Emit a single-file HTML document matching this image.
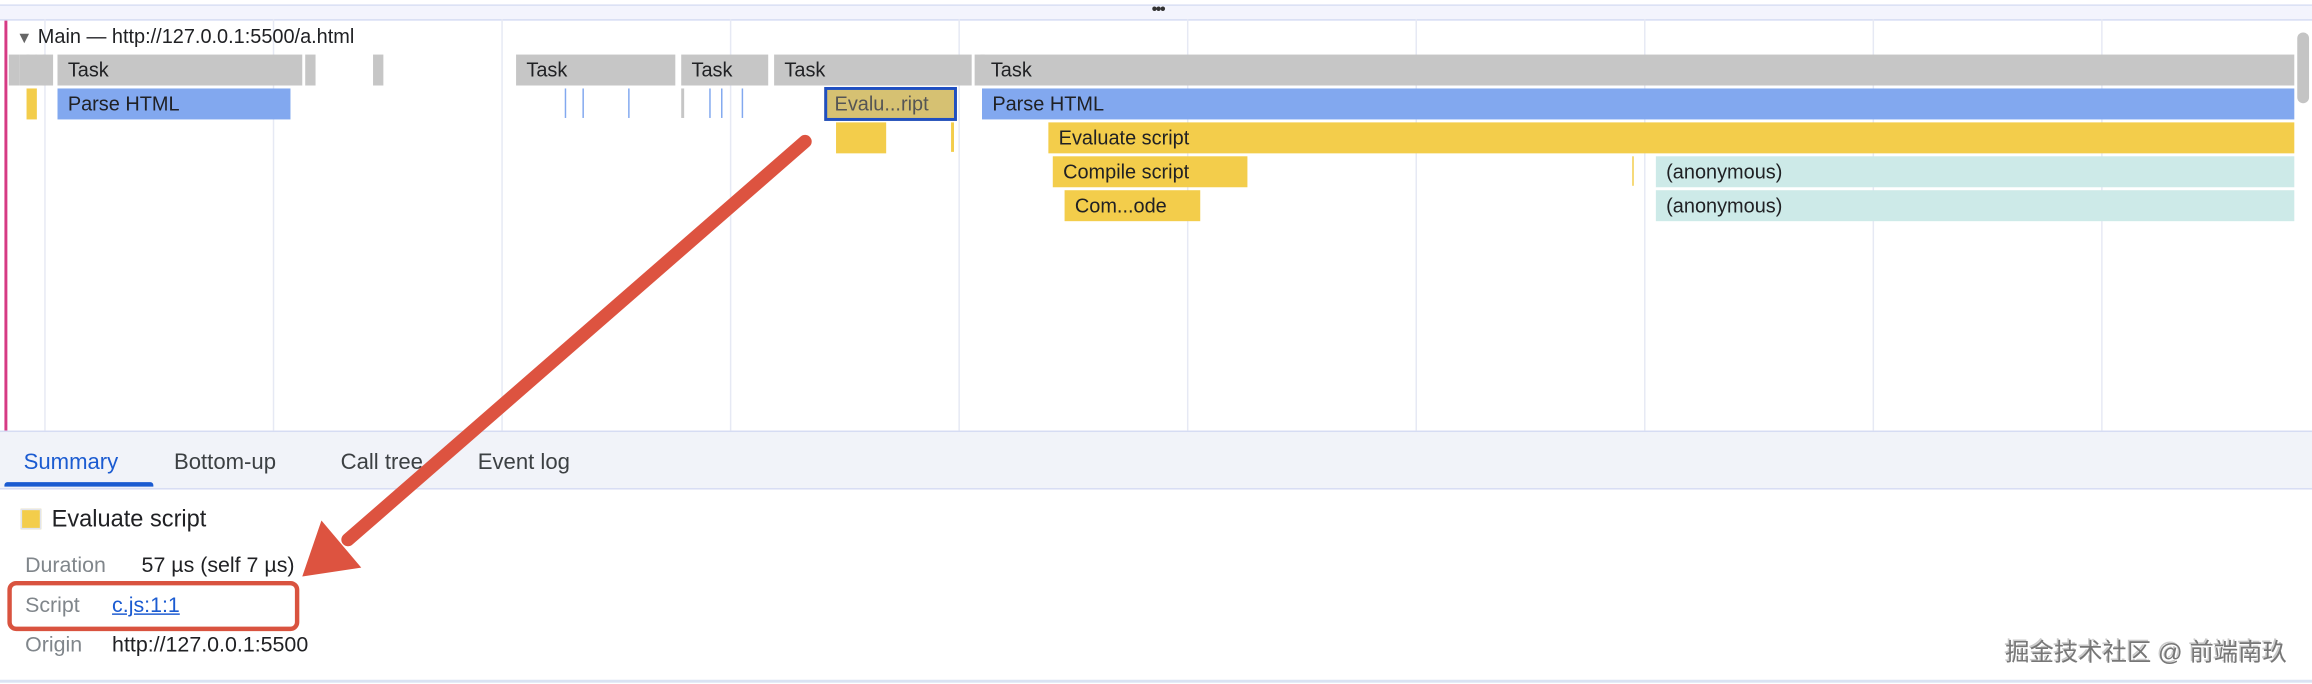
<!DOCTYPE html>
<html><head><meta charset="utf-8"><style>
html,body{margin:0;padding:0;background:#fff;}
body{width:2312px;height:684px;overflow:hidden;position:relative;}
#w{position:absolute;left:0;top:0;width:1568px;height:464px;transform:scale(1.47449);transform-origin:0 0;font-family:"Liberation Sans",sans-serif;}
.a{position:absolute;}
.b{position:absolute;height:21px;font-size:13.5px;line-height:21px;color:#202124;padding-left:7px;box-sizing:border-box;overflow:hidden;white-space:nowrap;}
.t{background:#c6c6c6;}
.p{background:#82a8ef;}
.y{background:#f3cd4b;}
.c{background:#cdeae8;}
.g{position:absolute;top:13px;width:1px;height:280px;background:#e6e9f4;}
.l{position:absolute;width:1px;height:20px;top:60px;background:#82a8ef;}
</style></head><body><div id="w">
<div class="a" style="left:0;top:3px;width:1568px;height:1px;background:#d6dcf3"></div>
<div class="a" style="left:0;top:4px;width:1568px;height:9px;background:#f3f4fd;border-bottom:1px solid #d6dcf3"></div>
<div class="a" style="left:781px;top:1px;font-size:11px;color:#333;letter-spacing:-1px">•••</div>
<div class="g" style="left:30px"></div><div class="g" style="left:185px"></div><div class="g" style="left:340px"></div><div class="g" style="left:495px"></div><div class="g" style="left:650px"></div><div class="g" style="left:805px"></div><div class="g" style="left:960px"></div><div class="g" style="left:1115px"></div><div class="g" style="left:1270px"></div><div class="g" style="left:1425px"></div>
<div class="a" style="left:3px;top:14px;width:2px;height:279px;background:#d63a84"></div>
<div class="a" style="left:11px;top:17px;font-size:13.5px;color:#202124"><span style="color:#666;font-size:11px">▼</span> Main — http://127.0.0.1:5500/a.html</div>
<div class="b t" style="left:6px;top:37px;width:5px"></div>
<div class="b t" style="left:13px;top:37px;width:3px"></div>
<div class="b t" style="left:18px;top:37px;width:4px"></div>
<div class="b t" style="left:24px;top:37px;width:3px"></div>
<div class="b t" style="left:29px;top:37px;width:7px"></div>
<div class="b t" style="left:39px;top:37px;width:166px">Task</div>
<div class="b t" style="left:207px;top:37px;width:1px"></div>
<div class="b t" style="left:253px;top:37px;width:3px"></div>
<div class="b t" style="left:350px;top:37px;width:108px">Task</div>
<div class="b t" style="left:462px;top:37px;width:59px">Task</div>
<div class="b t" style="left:525px;top:37px;width:134px">Task</div>
<div class="b t" style="left:661px;top:37px;width:2px"></div>
<div class="b t" style="left:665px;top:37px;width:891px">Task</div>
<div class="b y" style="left:18px;top:60px;width:4px"></div>
<div class="b p" style="left:39px;top:60px;width:158px">Parse HTML</div>
<div class="l" style="left:383px"></div><div class="l" style="left:395px"></div><div class="l" style="left:426px"></div><div class="l" style="left:481px"></div><div class="l" style="left:489px"></div><div class="l" style="left:503px"></div>
<div class="a" style="left:462px;top:60px;width:2px;height:20px;background:#c6c6c6"></div>
<div class="b" style="left:559px;top:59px;width:90px;height:23px;background:#d6c172;border:2px solid #1f4fc2;padding-left:5px;line-height:19px;color:#555">Evalu...ript</div>
<div class="a" style="left:645px;top:83px;width:2px;height:20px;background:#f3cd4b"></div>
<div class="b p" style="left:666px;top:60px;width:890px">Parse HTML</div>
<div class="b y" style="left:567px;top:83px;width:34px"></div>
<div class="b y" style="left:711px;top:83px;width:845px">Evaluate script</div>
<div class="b y" style="left:714px;top:106px;width:132px">Compile script</div>
<div class="a" style="left:1107px;top:106px;width:1px;height:20px;background:#f3cd4b"></div>
<div class="b c" style="left:1123px;top:106px;width:433px">(anonymous)</div>
<div class="b y" style="left:722px;top:129px;width:92px">Com...ode</div>
<div class="b c" style="left:1123px;top:129px;width:433px">(anonymous)</div>
<div class="a" style="left:1558px;top:22px;width:8px;height:48px;border-radius:4px;background:#c4c4c4"></div>
<div class="a" style="left:0;top:292px;width:1568px;height:38px;background:#f1f3f9;border-top:1px solid #d6dcf3;border-bottom:1px solid #d6dcf3"></div>
<div class="a" style="left:16px;top:305px;font-size:15px;color:#1b5bd1">Summary</div>
<div class="a" style="left:3px;top:327px;width:101px;height:3px;background:#1b5bd1;border-radius:2px 2px 0 0"></div>
<div class="a" style="left:118px;top:305px;font-size:15px;color:#3c4043">Bottom-up</div>
<div class="a" style="left:231px;top:305px;font-size:15px;color:#3c4043">Call tree</div>
<div class="a" style="left:324px;top:305px;font-size:15px;color:#3c4043">Event log</div>
<div class="a" style="left:14px;top:345px;width:14px;height:14px;background:#f3cd4b;border:1px solid #e0e4ef;box-sizing:border-box"></div>
<div class="a" style="left:35px;top:344px;font-size:16px;color:#202124">Evaluate script</div>
<div class="a" style="left:17px;top:376px;font-size:14.5px;color:#80868b">Duration</div>
<div class="a" style="left:96px;top:376px;font-size:14.5px;color:#202124">57 µs (self 7 µs)</div>
<div class="a" style="left:17px;top:403px;font-size:14.5px;color:#80868b">Script</div>
<div class="a" style="left:76px;top:403px;font-size:14.5px;color:#1b5bd1;text-decoration:underline">c.js:1:1</div>
<div class="a" style="left:17px;top:430px;font-size:14.5px;color:#80868b">Origin</div>
<div class="a" style="left:76px;top:430px;font-size:14.5px;color:#202124">http://127.0.0.1:5500</div>
<div class="a" style="left:5px;top:394px;width:198px;height:34px;border:3px solid #d9533f;border-radius:6px;box-sizing:border-box"></div>
<div class="a" style="left:0;top:461px;width:1568px;height:2px;background:#dbe3f3"></div>
<div class="a" style="left:1360px;top:429px;font-size:16.5px;color:#777;text-shadow:1px 1px 0 #fff,-1px -1px 0 #ccc;font-family:'Liberation Sans','Noto Sans CJK SC',sans-serif">掘金技术社区 @ 前端南玖</div>
<svg class="a" style="left:0;top:0" width="1568" height="464">
<line x1="546" y1="96" x2="236" y2="366" stroke="#dd5340" stroke-width="9" stroke-linecap="round"/>
<polygon points="205,391 218,353 245,385" fill="#dd5340"/>
</svg>
</div></body></html>
